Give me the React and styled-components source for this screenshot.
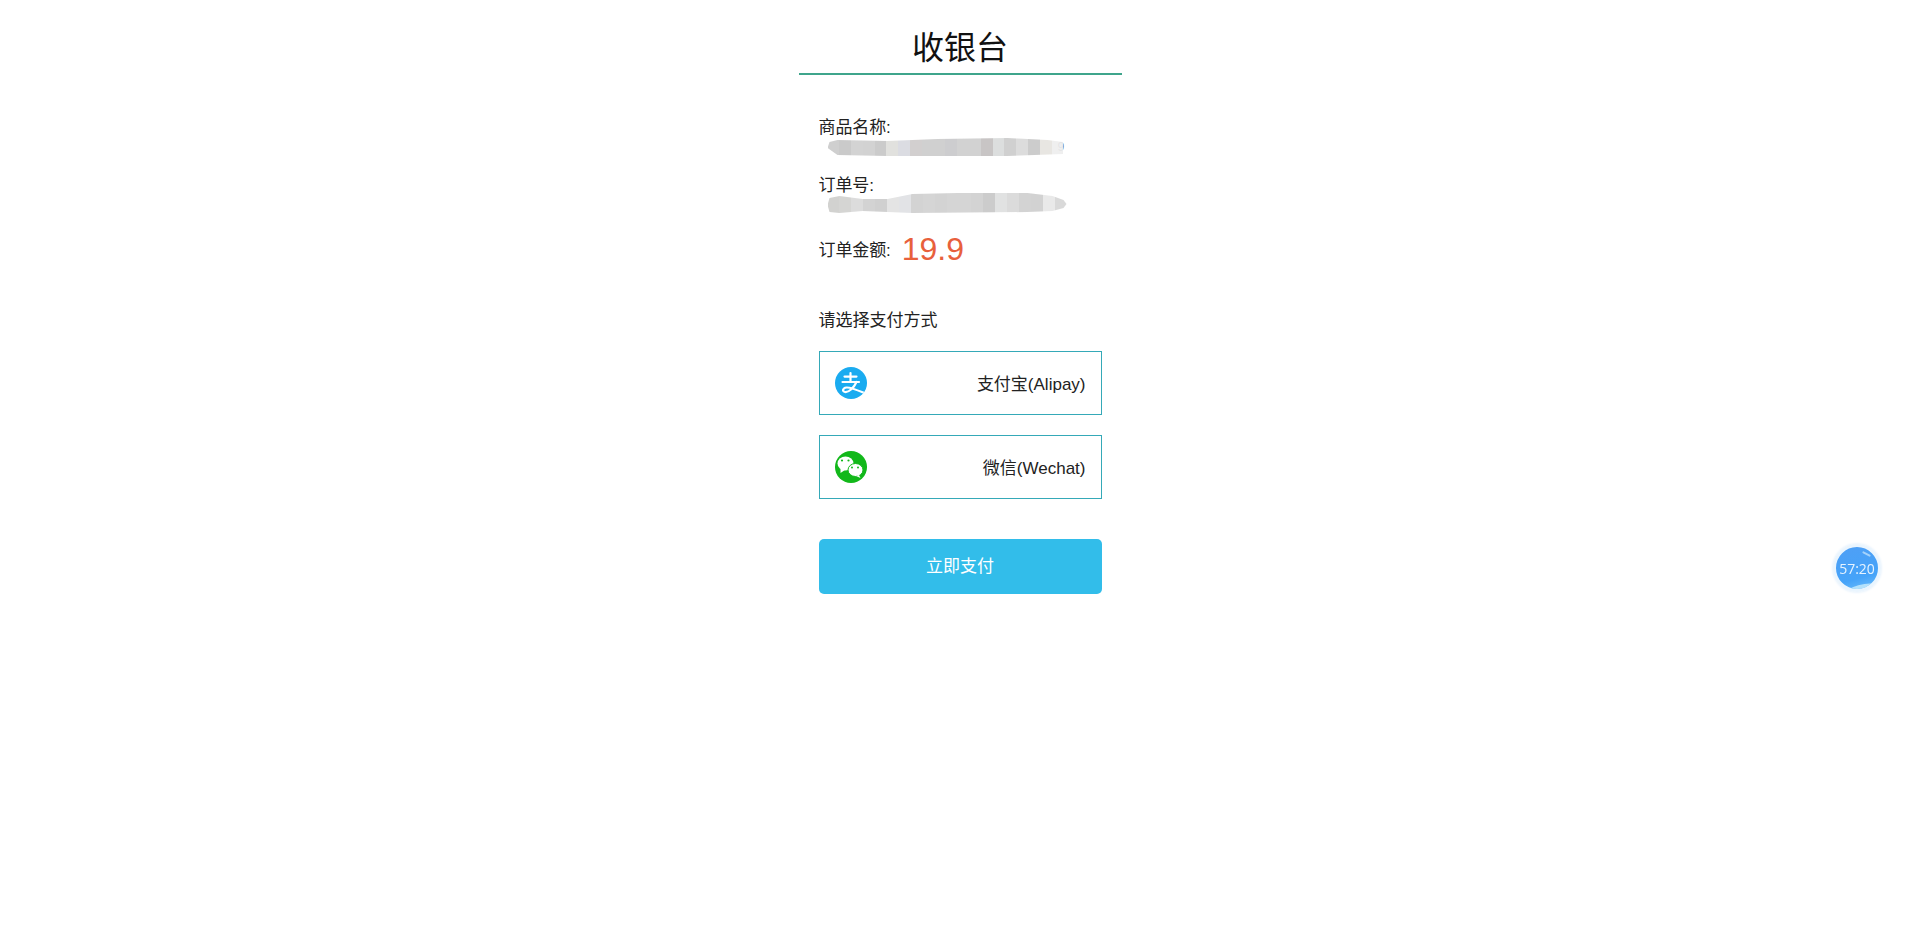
import React from 'react'
import styled, { createGlobalStyle } from 'styled-components'

const GlobalStyle = createGlobalStyle`
  html, body {
    margin: 0;
    padding: 0;
    background: #fff;
  }
  body {
    font-family: "Liberation Sans", "Noto Sans CJK SC", sans-serif;
    color: #222;
  }
`

const Page = styled.div`
  width: 323px;
  height: 942px;
  margin: 0 auto;
`

const Title = styled.h1`
  margin: 0;
  height: 75px;
  box-sizing: border-box;
  border-bottom: 2px solid #3fa58c;
  line-height: 96px;
  overflow: hidden;
  text-align: center;
  font-size: 32px;
  font-weight: 400;
  color: #111;
`

const Content = styled.div`
  width: 283px;
  padding: 42px 20px 0;
`

const Label = styled.div`
  margin-top: ${p => p.$top || 0}px;
  font-size: 17px;
  line-height: 22px;
  height: 20px;
  letter-spacing: -0.1px;
`

const SmudgeLine = styled.div`
  display: flex;
  align-items: center;
  margin: ${p => p.$top}px 0 0 9px;
`

const Smudge = styled.div`
  display: flex;
  flex: none;
  width: ${p => p.$width}px;
  height: ${p => p.$height}px;
  clip-path: polygon(${p => p.$shape});
  opacity: 0.92;
`

const SmudgeCell = styled.div`
  flex: 1;
  background: ${p => p.$color};
`

const SmudgeBlur = styled.div`
  filter: blur(0.7px);
`

const Residue = styled.span`
  margin-left: -6px;
  font-size: 12px;
  line-height: 18px;
  color: #778;
`

const AmountRow = styled.div`
  display: flex;
  align-items: center;
  height: 40px;
  margin-top: 15px;
`

const Amount = styled.span`
  margin-left: 11px;
  font-size: 32px;
  color: #e8603c;
`

const Choose = styled.div`
  margin-top: 41px;
  height: 20px;
  font-size: 17px;
  line-height: 22px;
`

const PayOption = styled.div`
  display: flex;
  align-items: center;
  justify-content: space-between;
  box-sizing: border-box;
  height: 64px;
  margin-top: ${p => p.$top}px;
  padding: 0 15px;
  border: 1px solid #35a9b8;
  font-size: 17px;
`

const PayName = styled.span`
  margin-bottom: 2px;
`

const PayButton = styled.button`
  display: block;
  width: 283px;
  height: 55px;
  margin-top: 40px;
  padding: 0 0 4px;
  border: 0;
  border-radius: 5px;
  background: #32bdea;
  color: #fff;
  font-family: inherit;
  font-size: 17px;
`

const Timer = styled.div`
  position: fixed;
  left: 1833px;
  top: 544px;
  width: 48px;
  height: 48px;
  box-sizing: border-box;
  border: 3px solid #eaf5fe;
  border-radius: 50%;
  box-shadow: 0 0 3px #d3e7fa;
  background: linear-gradient(165deg, #4f9ff5 0%, #45a3f9 70%, #6fbefa 100%);
  color: #e6f3ff;
  font-family: "Open Sans", sans-serif;
  font-size: 14px;
  line-height: 43px;
  text-align: center;
  overflow: hidden;

  &::before {
    content: '';
    position: absolute;
    left: 26px;
    top: 6px;
    width: 9px;
    height: 2px;
    border-radius: 2px;
    background: #a4d2fb;
    transform: rotate(28deg);
  }

  &::after {
    content: '';
    position: absolute;
    left: 6px;
    top: 38px;
    width: 36px;
    height: 12px;
    border-radius: 50%;
    background: #b4e1fb;
    transform: rotate(-16deg);
  }
`

const AlipayIcon = () => (
  <svg width="32" height="32" viewBox="0 0 32 32">
    <defs>
      <clipPath id="alipay-clip">
        <circle cx="16" cy="16" r="16" />
      </clipPath>
    </defs>
    <circle cx="16" cy="16" r="16" fill="#1aabf0" />
    <g clipPath="url(#alipay-clip)" fill="none" stroke="#fff" strokeWidth="2.2" strokeLinecap="round">
      <path d="M9.5 9.6H21.5M15.5 6V15M7.5 15H24" />
      <path d="M21.5 15C19 20.5 14 25.5 10 25C7 24.5 7.5 21 11.5 20.5C16 20 23 23.5 34 28" />
    </g>
  </svg>
)

const WechatIcon = () => (
  <svg width="32" height="32" viewBox="0 0 32 32">
    <circle cx="16" cy="16" r="16" fill="#12b81a" />
    <ellipse cx="10.5" cy="12.5" rx="8" ry="7" fill="#fff" />
    <path d="M5.5 17.5L5.5 22L10 19Z" fill="#fff" />
    <circle cx="7" cy="9.5" r="1.1" fill="#12b81a" />
    <circle cx="13.5" cy="9.5" r="1.1" fill="#12b81a" />
    <ellipse cx="20.5" cy="19" rx="7.5" ry="6.5" fill="#fff" stroke="#12b81a" strokeWidth="1" />
    <path d="M24 24L25.5 27L21 25Z" fill="#fff" />
    <circle cx="17" cy="16.5" r="1" fill="#12b81a" />
    <circle cx="23" cy="16.5" r="1" fill="#12b81a" />
  </svg>
)

const nameCells = ['#cbcbcb', '#c6c6c6', '#d0d0d0', '#cfcfcf', '#c7c7c7', '#dfdfdc', '#d8dae0', '#cfcbcb', '#cdcccc', '#cdcdcd', '#c9c9cb', '#cfcfcf', '#cfcfcf', '#c4c0c0', '#dadcdc', '#cccccc', '#dadada', '#c8c8c8', '#e6e4e0', '#eeeeee']
const orderCells = ['#cfcfcd', '#d2d2d0', '#dadada', '#d0d0d0', '#cdcdcd', '#e2e2e2', '#e0e1e4', '#d0d0d0', '#d2d2d2', '#d0d0d0', '#d2d2d2', '#d2d2d2', '#d0d0d0', '#c8c8c8', '#dfe0e0', '#d8d8d8', '#d0d0d0', '#cfcfcf', '#e8e8e8', '#d6d6d6']

const nameShape = '2px 4px, 10px 2px, 60px 3px, 110px 1px, 180px 0, 220px 2px, 236px 4px, 236px 16px, 180px 18px, 60px 18px, 10px 17px, 0 10px'
const orderShape = '2px 5px, 12px 3px, 35px 6px, 60px 6px, 85px 1px, 130px 0, 200px 0, 225px 3px, 236px 7px, 239px 11px, 236px 15px, 225px 18px, 200px 19px, 85px 20px, 60px 19px, 35px 18px, 12px 20px, 2px 19px, 0 12px'

export default function App() {
  return (
    <Page>
      <GlobalStyle />
      <Title>收银台</Title>
      <Content>
        <Label>商品名称:</Label>
        <SmudgeLine $top={1}>
          <SmudgeBlur>
            <Smudge $width={236} $height={18} $shape={nameShape}>
              {nameCells.map((c, i) => <SmudgeCell key={i} $color={c} />)}
            </Smudge>
          </SmudgeBlur>
          <Residue>9</Residue>
        </SmudgeLine>
        <Label $top={19}>订单号:</Label>
        <SmudgeLine $top={-2}>
          <SmudgeBlur>
            <Smudge $width={239} $height={21} $shape={orderShape}>
              {orderCells.map((c, i) => <SmudgeCell key={i} $color={c} />)}
            </Smudge>
          </SmudgeBlur>
        </SmudgeLine>
        <AmountRow>
          <Label $top={2}>订单金额:</Label>
          <Amount>19.9</Amount>
        </AmountRow>
        <Choose>请选择支付方式</Choose>
        <PayOption $top={21}>
          <AlipayIcon />
          <PayName>支付宝(Alipay)</PayName>
        </PayOption>
        <PayOption $top={20}>
          <WechatIcon />
          <PayName>微信(Wechat)</PayName>
        </PayOption>
        <PayButton>立即支付</PayButton>
      </Content>
      <Timer>57:20</Timer>
    </Page>
  )
}
